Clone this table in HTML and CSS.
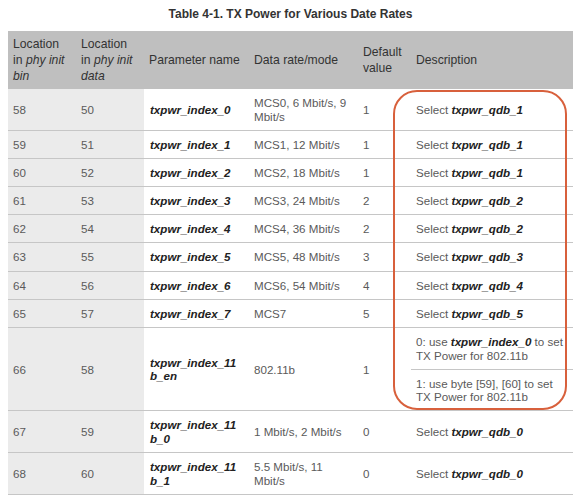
FILE: index.html
```html
<!DOCTYPE html>
<html>
<head>
<meta charset="utf-8">
<link rel="stylesheet" href="styles.css">
</head>
<body>
<div class="page">
  <div class="title">Table 4-1. TX Power for Various Date Rates</div>
  <table class="tx">
    <colgroup>
      <col class="c1"><col class="c2"><col class="c3"><col class="c4"><col class="c5"><col class="c6">
    </colgroup>
    <thead>
      <tr>
        <th>Location<br>in <i>phy init</i><br><i>bin</i></th>
        <th>Location<br>in <i>phy init</i><br><i>data</i></th>
        <th>Parameter name</th>
        <th>Data rate/mode</th>
        <th>Default<br>value</th>
        <th>Description</th>
      </tr>
    </thead>
    <tbody>
      <tr><td class="g">58</td><td class="g">50</td><td class="p">txpwr_index_0</td><td>MCS0, 6 Mbit/s, 9<br>Mbit/s</td><td>1</td><td>Select <b>txpwr_qdb_1</b></td></tr>
      <tr><td class="g">59</td><td class="g">51</td><td class="p">txpwr_index_1</td><td>MCS1, 12 Mbit/s</td><td>1</td><td>Select <b>txpwr_qdb_1</b></td></tr>
      <tr><td class="g">60</td><td class="g">52</td><td class="p">txpwr_index_2</td><td>MCS2, 18 Mbit/s</td><td>1</td><td>Select <b>txpwr_qdb_1</b></td></tr>
      <tr><td class="g">61</td><td class="g">53</td><td class="p">txpwr_index_3</td><td>MCS3, 24 Mbit/s</td><td>2</td><td>Select <b>txpwr_qdb_2</b></td></tr>
      <tr><td class="g">62</td><td class="g">54</td><td class="p">txpwr_index_4</td><td>MCS4, 36 Mbit/s</td><td>2</td><td>Select <b>txpwr_qdb_2</b></td></tr>
      <tr><td class="g">63</td><td class="g">55</td><td class="p">txpwr_index_5</td><td>MCS5, 48 Mbit/s</td><td>3</td><td>Select <b>txpwr_qdb_3</b></td></tr>
      <tr><td class="g">64</td><td class="g">56</td><td class="p">txpwr_index_6</td><td>MCS6, 54 Mbit/s</td><td>4</td><td>Select <b>txpwr_qdb_4</b></td></tr>
      <tr><td class="g">65</td><td class="g">57</td><td class="p">txpwr_index_7</td><td>MCS7</td><td>5</td><td>Select <b>txpwr_qdb_5</b></td></tr>
      <tr><td class="g" rowspan="2">66</td><td class="g" rowspan="2">58</td><td class="p" rowspan="2">txpwr_index_11<br>b_en</td><td rowspan="2">802.11b</td><td rowspan="2">1</td><td class="d">0: use <b>txpwr_index_0</b> to set<br>TX Power for 802.11b</td></tr>
      <tr><td class="d">1: use byte [59], [60] to set<br>TX Power for 802.11b</td></tr>
      <tr><td class="g">67</td><td class="g">59</td><td class="p">txpwr_index_11<br>b_0</td><td>1 Mbit/s, 2 Mbit/s</td><td>0</td><td>Select <b>txpwr_qdb_0</b></td></tr>
      <tr><td class="g">68</td><td class="g">60</td><td class="p">txpwr_index_11<br>b_1</td><td>5.5 Mbit/s, 11<br>Mbit/s</td><td>0</td><td>Select <b>txpwr_qdb_0</b></td></tr>
    </tbody>
  </table>
  <div class="highlight"></div>
</div>
</body>
</html>
```

FILE: styles.css
```css
html, body {
  margin: 0;
  padding: 0;
  background: #ffffff;
}
.page {
  position: relative;
  padding: 7px 12px 0 8px;
  font-family: "Liberation Sans", Arial, sans-serif;
  font-size: 11.6px;
  color: #5a5a5a;
}
.title {
  text-align: center;
  font-weight: bold;
  font-size: 12px;
  line-height: 14px;
  color: #333333;
  margin-bottom: 10px;
}
.tx {
  width: 565px;
  border-collapse: collapse;
  table-layout: fixed;
}
.c1 { width: 68px; }
.c2 { width: 68px; }
.c3 { width: 105px; }
.c4 { width: 109px; }
.c5 { width: 53px; }
.c6 { width: 162px; }
.tx th {
  background: #bfbfbf;
  color: #333333;
  font-weight: normal;
  font-size: 12.2px;
  text-align: left;
  vertical-align: middle;
  line-height: 16px;
  padding: 5px;
  height: 48px;
  white-space: nowrap;
}
.tx td {
  vertical-align: middle;
  line-height: 13.5px;
  padding: 7px 5px 6.7px 5px;
  border-bottom: 1px solid #c6c6c6;
  white-space: nowrap;
}
.tx td.g {
  background: #ebebeb;
}
.tx td.p {
  font-weight: bold;
  font-style: italic;
  color: #222222;
  padding-left: 6px;
}
.tx td b {
  font-style: italic;
  color: #222222;
}
.highlight {
  position: absolute;
  left: 393px;
  top: 90px;
  width: 170px;
  height: 316px;
  border: 2px solid #d8603c;
  border-radius: 24px;
  pointer-events: none;
}
```
